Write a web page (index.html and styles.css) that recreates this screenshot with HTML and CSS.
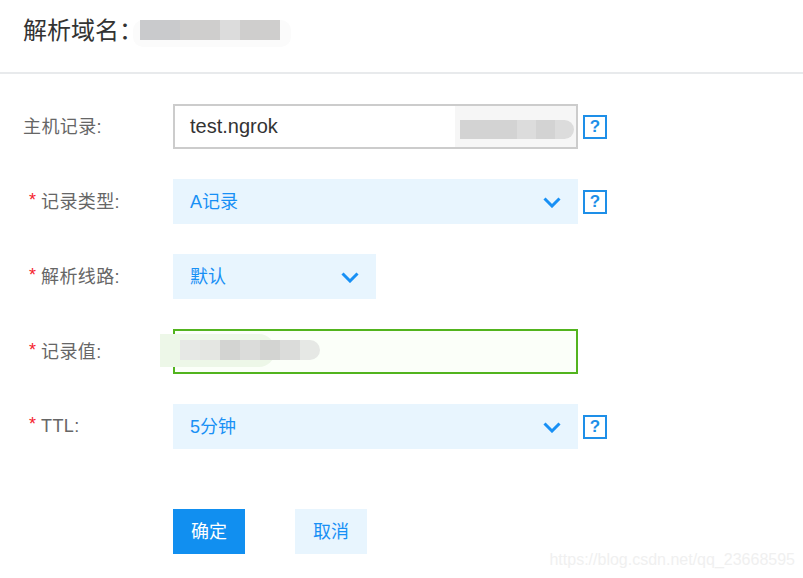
FILE: index.html
```html
<!DOCTYPE html>
<html lang="zh-CN">
<head>
    <meta charset="UTF-8">
    <title>解析域名</title>
    <link rel="stylesheet" href="styles.css">
</head>
<body>
    <div class="page">
        <div class="header">
            <h2 class="title">解析域名：</h2>
            <div class="halo halo-title"></div>
            <div class="blur blur-title">
                <i class="c1"></i><i class="c2"></i><i class="c4 half"></i><i class="c2"></i>
            </div>
        </div>

        <div class="form">
            <div class="row">
                <label class="label">主机记录:</label>
                <div class="field field-host">test.ngrok
                    <div class="host-suffix">
                        <div class="blur blur-host">
                            <i class="c3 wide"></i><i class="c4"></i><i class="c3"></i><i class="c4 end"></i>
                        </div>
                    </div>
                </div>
                <span class="help">?</span>
            </div>

            <div class="row">
                <label class="label"><em>*</em>记录类型:</label>
                <div class="select"><span>A记录</span>
                    <svg class="arrow" width="18" height="11" viewBox="0 0 18 11"><polyline points="1.5,1.5 9,9 16.5,1.5"/></svg>
                </div>
                <span class="help">?</span>
            </div>

            <div class="row">
                <label class="label"><em>*</em>解析线路:</label>
                <div class="select select-short"><span>默认</span>
                    <svg class="arrow" width="18" height="11" viewBox="0 0 18 11"><polyline points="1.5,1.5 9,9 16.5,1.5"/></svg>
                </div>
            </div>

            <div class="row">
                <label class="label"><em>*</em>记录值:</label>
                <div class="field field-value">
                    <div class="halo halo-value"></div>
                    <div class="blur blur-value">
                        <i class="g1"></i><i class="g2"></i><i class="g3"></i><i class="g4"></i><i class="g3"></i><i class="g4"></i><i class="g1 end"></i>
                    </div>
                </div>
            </div>

            <div class="row">
                <label class="label"><em>*</em>TTL:</label>
                <div class="select"><span>5分钟</span>
                    <svg class="arrow" width="18" height="11" viewBox="0 0 18 11"><polyline points="1.5,1.5 9,9 16.5,1.5"/></svg>
                </div>
                <span class="help">?</span>
            </div>

            <div class="actions">
                <button class="btn btn-primary">确定</button>
                <button class="btn btn-cancel">取消</button>
            </div>
        </div>

        <div class="watermark">https://blog.csdn.net/qq_23668595</div>
    </div>
</body>
</html>
```

FILE: styles.css
```css
* {
    box-sizing: border-box;
}

body {
    margin: 0;
    background: #fff;
    font-family: "Liberation Sans", "Noto Sans CJK SC", sans-serif;
}

.page {
    position: relative;
    width: 803px;
    height: 578px;
    overflow: hidden;
}

.header {
    position: relative;
    height: 74px;
    padding: 14px 0 0 23px;
    border-bottom: 2px solid #e8eaec;
}

.title {
    margin: 0;
    font-size: 24px;
    line-height: 34px;
    font-weight: 400;
    color: #333;
}

.form {
    padding-top: 30px;
}

.row {
    display: flex;
    align-items: center;
    height: 45px;
    margin-bottom: 30px;
}

.label {
    width: 173px;
    padding-left: 23px;
    padding-bottom: 3px;
    font-size: 18px;
    letter-spacing: 0.4px;
    color: #666;
}

.label em {
    display: inline-block;
    width: 18px;
    padding-left: 6px;
    font-style: normal;
    vertical-align: 2px;
    color: #f5222d;
}

.field {
    position: relative;
    width: 405px;
    height: 45px;
    padding-left: 15px;
    font-size: 20px;
    line-height: 41px;
    color: #333;
}

.field-host {
    border: 2px solid #ccc;
}

.host-suffix {
    position: absolute;
    top: 0;
    right: 0;
    bottom: 0;
    width: 121px;
    background: #f6f6f6;
}

.field-value {
    border: 2px solid #52b41e;
    background: #fbfff9;
}

.select {
    display: flex;
    align-items: center;
    justify-content: space-between;
    width: 405px;
    height: 45px;
    padding: 0 17px 3px 17px;
    background: #e8f5fe;
    font-size: 18px;
    color: #1890f5;
}

.select-short {
    width: 203px;
}

.arrow {
    margin-top: 5px;
    fill: none;
    stroke: #1890f5;
    stroke-width: 3;
}

.help {
    width: 24px;
    height: 24px;
    margin-left: 5px;
    border: 2px solid #1e8fe8;
    text-align: center;
    font-size: 17px;
    font-weight: 700;
    line-height: 20px;
    color: #1e8fe8;
}

.actions {
    display: flex;
    gap: 50px;
    margin-top: 60px;
    padding-left: 173px;
}

.btn {
    width: 72px;
    height: 45px;
    border: none;
    padding: 0 0 3px;
    font-family: inherit;
    font-size: 18px;
}

.btn-primary {
    background: #118ff0;
    color: #fff;
}

.btn-cancel {
    background: #e8f5fe;
    color: #1890f5;
}

/* smudged out parts of the screenshot */
.blur {
    position: absolute;
    display: flex;
}

.blur i {
    display: block;
    flex: 2;
}

.blur i.half {
    flex: 1;
}

.blur i.wide {
    flex: 6;
}

.blur i.end {
    border-radius: 0 10px 10px 0;
}

.halo {
    position: absolute;
}

.halo-title {
    left: 133px;
    top: 20px;
    width: 158px;
    height: 27px;
    border-radius: 10px;
    background: #fbfbfb;
}

.halo-value {
    left: -15px;
    top: 3px;
    width: 115px;
    height: 33px;
    border-radius: 0 16px 16px 0;
    background: #edf7e8;
}

.blur-title {
    left: 140px;
    top: 20px;
    width: 140px;
    height: 20px;
}

.blur-host {
    left: 5px;
    top: 14px;
    width: 114px;
    height: 19px;
}

.blur-value {
    left: 5px;
    top: 9px;
    width: 140px;
    height: 20px;
}

.c1 { background: #c9cacc; }
.c2 { background: #cfcecd; }
.c3 { background: #d3d3d3; }
.c4 { background: #dcdcdc; }

.g1 { background: #e6e8e5; }
.g2 { background: #e4e6e2; }
.g3 { background: #d3d4d2; }
.g4 { background: #dbdcda; }

.watermark {
    position: absolute;
    right: 8px;
    bottom: 9px;
    font-size: 16px;
    color: #f0f0f0;
}
```
